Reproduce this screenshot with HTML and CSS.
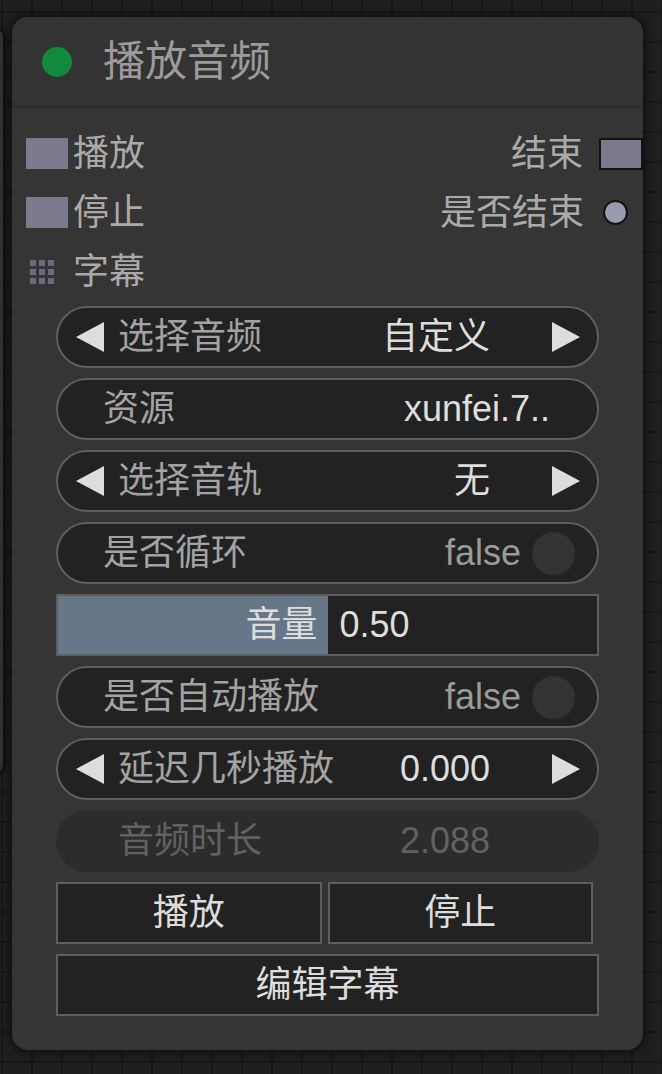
FILE: index.html
```html
<!DOCTYPE html>
<html lang="zh">
<head>
<meta charset="utf-8">
<title>播放音频</title>
<link rel="stylesheet" href="styles.css">
</head>
<body>
<div class="canvas">
  <div class="side-node"></div>
  <div class="node">
    <div class="title">
      <span class="dot"></span>
      <span class="title-text">播放音频</span>
    </div>
    <div class="slots">
      <div class="slot-row">
        <div class="slot-in"><span class="ev-in"></span><span class="slot-label">播放</span></div>
        <div class="slot-out"><span class="slot-label">结束</span><span class="ev-out"></span></div>
      </div>
      <div class="slot-row">
        <div class="slot-in"><span class="ev-in"></span><span class="slot-label">停止</span></div>
        <div class="slot-out"><span class="slot-label">是否结束</span><span class="dot-out"></span></div>
      </div>
      <div class="slot-row">
        <div class="slot-in">
          <span class="grid-in"><i></i><i></i><i></i><i></i><i></i><i></i><i></i><i></i><i></i></span>
          <span class="slot-label grid-label">字幕</span>
        </div>
      </div>
    </div>
    <div class="widgets">
      <div class="w w-num">
        <svg class="arrow" viewBox="0 0 28 30" width="28" height="30"><polygon points="28,0 28,30 0,15"/></svg>
        <span class="w-label">选择音频</span>
        <span class="w-value">自定义</span>
        <svg class="arrow" viewBox="0 0 28 30" width="28" height="30"><polygon points="0,0 0,30 28,15"/></svg>
      </div>
      <div class="w w-text">
        <span class="w-label">资源</span>
        <span class="w-value">xunfei.7..</span>
      </div>
      <div class="w w-num">
        <svg class="arrow" viewBox="0 0 28 30" width="28" height="30"><polygon points="28,0 28,30 0,15"/></svg>
        <span class="w-label">选择音轨</span>
        <span class="w-value">无</span>
        <svg class="arrow" viewBox="0 0 28 30" width="28" height="30"><polygon points="0,0 0,30 28,15"/></svg>
      </div>
      <div class="w w-toggle">
        <span class="w-label">是否循环</span>
        <span class="w-state">false</span>
        <span class="knob"></span>
      </div>
      <div class="w w-slider">
        <div class="fill" style="width:50%"></div>
        <div class="slider-text"><span>音量</span><span>0.50</span></div>
      </div>
      <div class="w w-toggle">
        <span class="w-label">是否自动播放</span>
        <span class="w-state">false</span>
        <span class="knob"></span>
      </div>
      <div class="w w-num">
        <svg class="arrow" viewBox="0 0 28 30" width="28" height="30"><polygon points="28,0 28,30 0,15"/></svg>
        <span class="w-label">延迟几秒播放</span>
        <span class="w-value">0.000</span>
        <svg class="arrow" viewBox="0 0 28 30" width="28" height="30"><polygon points="0,0 0,30 28,15"/></svg>
      </div>
      <div class="w w-num w-disabled">
        <svg class="arrow" viewBox="0 0 28 30" width="28" height="30"><polygon points="28,0 28,30 0,15"/></svg>
        <span class="w-label">音频时长</span>
        <span class="w-value">2.088</span>
        <svg class="arrow" viewBox="0 0 28 30" width="28" height="30"><polygon points="0,0 0,30 28,15"/></svg>
      </div>
      <div class="btn-row">
        <div class="btn">播放</div>
        <div class="btn">停止</div>
      </div>
      <div class="btn">编辑字幕</div>
    </div>
  </div>
</div>
</body>
</html>
```
FILE: styles.css
```css
html, body {
  margin: 0;
  padding: 0;
}
body {
  width: 662px;
  height: 1074px;
  overflow: hidden;
  background-color: #1f1f1f;
  background-image:
    linear-gradient(#171717 2px, transparent 2px),
    linear-gradient(90deg, #171717 2px, transparent 2px);
  background-size: 30px 30px;
  background-position: 1px 11px;
  font-family: "Liberation Sans", "Noto Sans CJK SC", sans-serif;
}
.canvas {
  position: relative;
  width: 662px;
  height: 1074px;
  padding-top: 17px;
  box-sizing: border-box;
}
.side-node {
  position: absolute;
  left: -20px;
  top: 30px;
  width: 23px;
  height: 742px;
  background: #303030;
  border-radius: 0 6px 6px 0;
  box-shadow: 2px 0 6px rgba(0,0,0,0.7);
}
.node {
  margin-left: 12px;
  width: 631px;
  height: 1033px;
  background: #353535;
  border-radius: 16px;
  box-shadow: 0 0 8px 2px rgba(0,0,0,0.55);
  overflow: hidden;
}
.title {
  height: 89px;
  display: flex;
  align-items: center;
  background: #333333;
  border-bottom: 2px solid #2b2b2b;
}
.dot {
  width: 30px;
  height: 30px;
  border-radius: 50%;
  background: #138a3b;
  margin-left: 30px;
}
.title-text {
  margin-left: 31px;
  font-size: 42px;
  line-height: 1;
  color: #9b9b9b;
}
.slots {
  padding-top: 16px;
}
.slot-row {
  height: 59px;
  display: flex;
  align-items: center;
  justify-content: space-between;
}
.slot-in, .slot-out {
  display: flex;
  align-items: center;
}
.slot-label {
  font-size: 36px;
  line-height: 1;
  color: #aaaaaa;
}
.ev-in {
  width: 42px;
  height: 31px;
  background: #7a7a8c;
  margin-left: 14px;
  margin-right: 5px;
}
.ev-out {
  width: 44px;
  height: 32px;
  box-sizing: border-box;
  border: 2px solid #111;
  background: #7a7a8c;
  margin-left: 16px;
}
.dot-out {
  width: 25px;
  height: 25px;
  box-sizing: border-box;
  border-radius: 50%;
  border: 2px solid #111;
  background: #9a9aae;
  margin-left: 19px;
  margin-right: 15px;
}
.grid-in {
  display: grid;
  grid-template-columns: repeat(3, 6px);
  grid-template-rows: repeat(3, 6px);
  gap: 3px;
  margin-left: 18px;
  margin-right: 19px;
}
.grid-in i {
  background: #6b6b7e;
}
.widgets {
  margin-top: 5px;
  padding: 0 44px;
  display: flex;
  flex-direction: column;
  gap: 10px;
}
.w {
  position: relative;
  height: 62px;
  box-sizing: border-box;
  border: 2px solid #5e5e5e;
  border-radius: 31px;
  background: #222222;
  display: flex;
  align-items: center;
  font-size: 36px;
  line-height: 1;
}
.w-label {
  flex: 1;
  color: #a3a3a3;
  white-space: nowrap;
}
.w-value {
  color: #dddddd;
  white-space: nowrap;
}
.arrow {
  fill: #dddddd;
  flex: none;
}
.w-num {
  padding-left: 18px;
  padding-right: 17px;
}
.w-num .arrow:first-child {
  margin-right: 14px;
}
.w-num .w-value {
  margin-right: 62px;
}
.w-text {
  padding-left: 45px;
  padding-right: 47px;
}
.w-toggle {
  padding-left: 45px;
  padding-right: 22px;
}
.w-state {
  color: #9a9a9a;
  margin-right: 11px;
}
.knob {
  width: 43px;
  height: 43px;
  border-radius: 50%;
  background: #333333;
}
.w-slider {
  border-radius: 0;
  justify-content: center;
}
.fill {
  position: absolute;
  left: 0;
  top: 0;
  bottom: 0;
  background: #667788;
}
.slider-text {
  position: relative;
  display: flex;
  gap: 22px;
  color: #dddddd;
}
.w-disabled {
  border-color: transparent;
  background: #2c2c2c;
}
.w-disabled .arrow {
  visibility: hidden;
}
.w-disabled .w-label,
.w-disabled .w-value {
  color: #616161;
}
.btn-row {
  display: grid;
  grid-template-columns: 1fr 1fr;
  gap: 6px;
  margin-right: 6px;
}
.btn {
  height: 62px;
  box-sizing: border-box;
  border: 2px solid #5e5e5e;
  background: #222222;
  display: flex;
  align-items: center;
  justify-content: center;
  font-size: 36px;
  line-height: 1;
  color: #dddddd;
}
```
